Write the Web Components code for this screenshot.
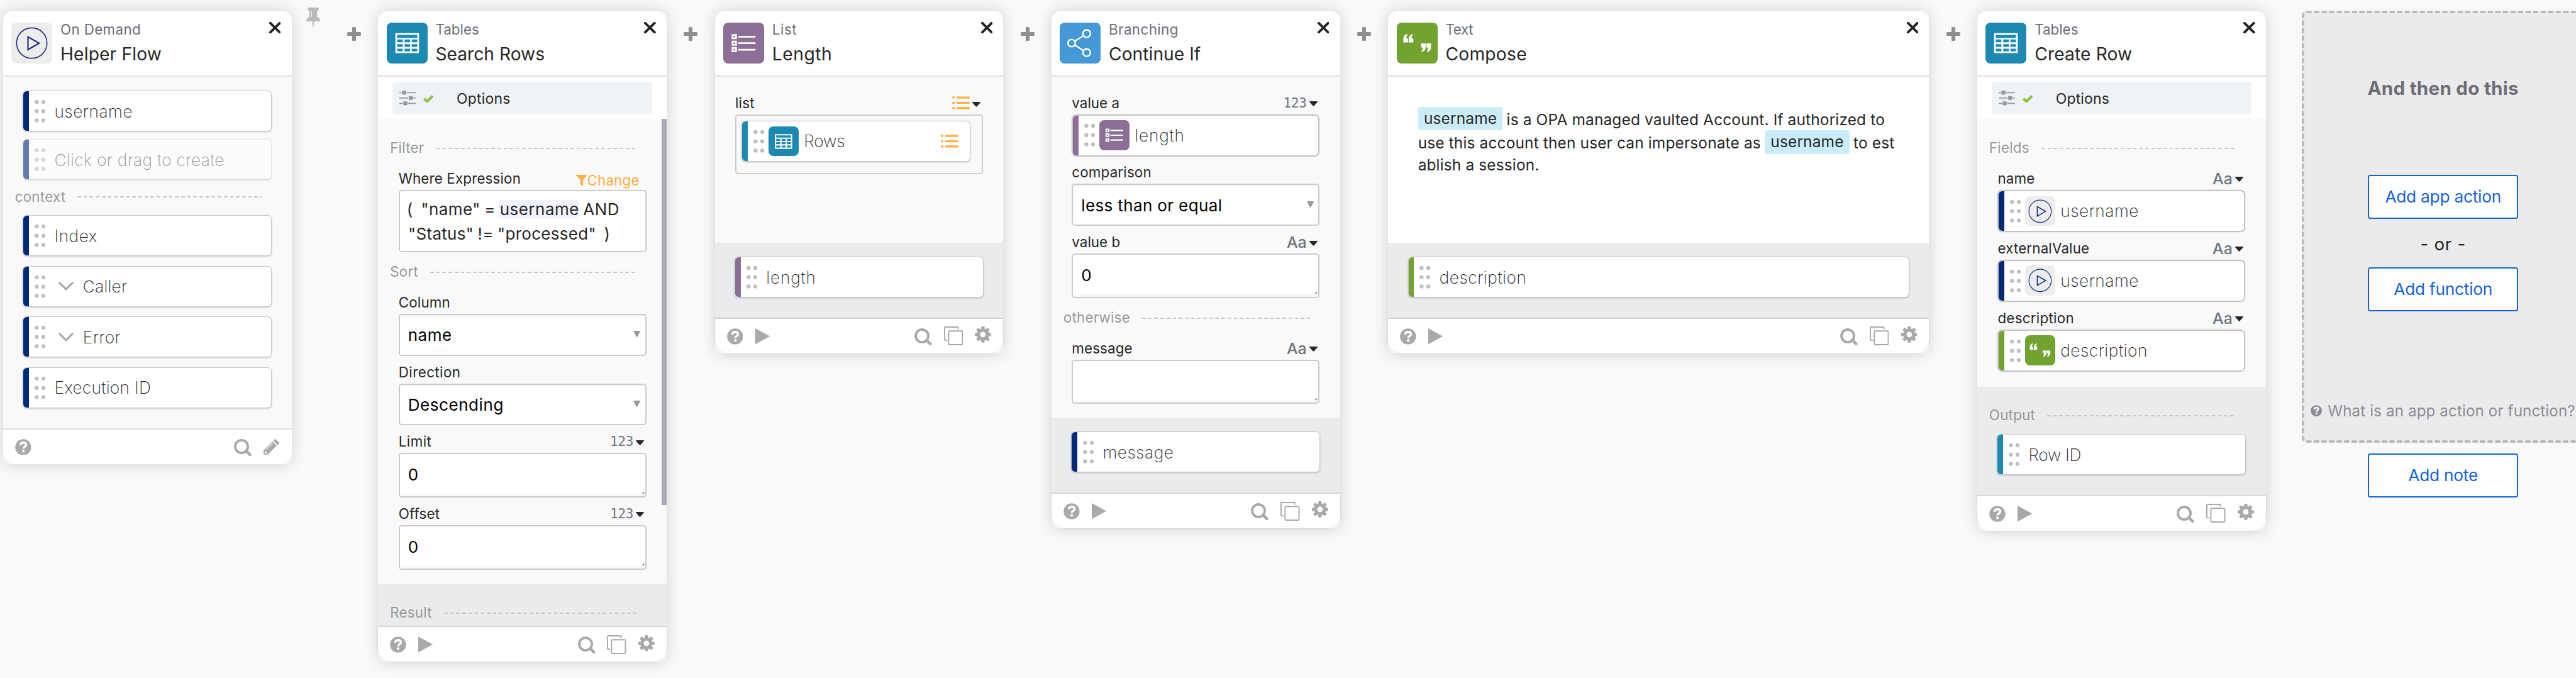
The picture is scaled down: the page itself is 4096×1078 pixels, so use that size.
<!DOCTYPE html>
<html lang="en">
<head>
<meta charset="utf-8">
<title>Flow designer</title>
<style>
  html, body { margin: 0; padding: 0; background: #f9f9f9; overflow: hidden; }
  body { font-family: Inter, "Liberation Sans", sans-serif; color: #272727; }
  /* vertical rhythm of a card's content */
  flow-section { margin-top: 17.5px; }
  flow-section:first-child, flow-section[slot] { margin-top: 33.3px; }
  flow-param { margin-top: 12.5px; }
  flow-param:first-child { margin-top: 28.5px; }
  flow-section + flow-param { margin-top: 21.2px; }
  flow-section + flow-field { margin-top: 16.7px; }
  flow-card > flow-field:first-child { margin-top: 24px; }
</style>
</head>
<body>
<flow-board>
  <flow-card app="On Demand" name="Helper Flow" icon="demand" mini style="--h:754px;--app-ls:.38px">
    <flow-field color="#00297a">username</flow-field>
    <flow-field color="#00297a" ghost style="margin-top:14.4px;--ls:.32px">Click or drag to create</flow-field>
    <flow-section style="margin-top:14px">context</flow-section>
    <flow-field color="#00297a">Index</flow-field>
    <flow-field color="#00297a" open style="margin-top:18.3px;--ls:.2px">Caller</flow-field>
    <flow-field color="#00297a" open style="margin-top:18.3px">Error</flow-field>
    <flow-field color="#00297a" style="margin-top:18.3px;--ls:.33px">Execution ID</flow-field>
  </flow-card>
  <flow-gap pin></flow-gap>

  <flow-card app="Tables" name="Search Rows" icon="table" options scroll style="--h:1083px;--in:773px;--app-ls:0px;--name-ls:0px">
    <flow-section>Filter</flow-section>
    <flow-param label="Where Expression" type="change">
      <flow-expression></flow-expression>
    </flow-param>
    <flow-section>Sort</flow-section>
    <flow-param label="Column"><flow-select>name</flow-select></flow-param>
    <flow-param label="Direction" style="--label-ls:.46px"><flow-select>Descending</flow-select></flow-param>
    <flow-param label="Limit" type="123" style="--label-ls:.45px"><flow-text>0</flow-text></flow-param>
    <flow-param label="Offset" type="123"><flow-text>0</flow-text></flow-param>
    <flow-section slot="out">Result</flow-section>
  </flow-card>
  <flow-gap></flow-gap>

  <flow-card app="List" name="Length" icon="list" style="--h:570px;--in:276px;--app-ls:.55px;--name-ls:.55px">
    <flow-param label="list" type="list">
      <flow-tray><flow-field color="#1c89b3" icon="table" list style="--ls:-.1px">Rows</flow-field></flow-tray>
    </flow-param>
    <flow-field slot="out" color="#8c6e96" style="--ls:.9px;margin-top:24px">length</flow-field>
  </flow-card>
  <flow-gap></flow-gap>

  <flow-card app="Branching" name="Continue If" icon="branch" style="--h:861px;--in:567px;--app-ls:.41px;--name-ls:.02px">
    <flow-param label="value a" type="123" style="--label-ls:.02px"><flow-field dropped color="#8c6e96" icon="list" style="--ls:.9px">length</flow-field></flow-param>
    <flow-param label="comparison"><flow-select style="--ls:.39px">less than or equal</flow-select></flow-param>
    <flow-param label="value b" type="Aa" style="--label-ls:.02px"><flow-text>0</flow-text></flow-param>
    <flow-section>otherwise</flow-section>
    <flow-param label="message" type="Aa" style="--label-ls:.12px"><flow-text></flow-text></flow-param>
    <flow-field slot="out" color="#00297a" style="margin-top:24px">message</flow-field>
  </flow-card>
  <flow-gap></flow-gap>

  <flow-card app="Text" name="Compose" icon="quote" white style="--w:900px;--h:570px;--in:276px;--app-ls:-.34px;--name-ls:.27px">
    <flow-compose></flow-compose>
    <flow-field slot="out" color="#72a230" style="margin-top:24px">description</flow-field>
  </flow-card>
  <flow-gap></flow-gap>

  <flow-card app="Tables" name="Create Row" icon="table" options style="--h:865px;--in:445px;--app-ls:0px">
    <flow-section>Fields</flow-section>
    <flow-param label="name" type="Aa"><flow-field dropped color="#00297a" icon="demand">username</flow-field></flow-param>
    <flow-param label="externalValue" type="Aa"><flow-field dropped color="#00297a" icon="demand">username</flow-field></flow-param>
    <flow-param label="description" type="Aa" style="--label-ls:.28px"><flow-field dropped color="#72a230" icon="quote">description</flow-field></flow-param>
    <flow-section slot="out">Output</flow-section>
    <flow-field slot="out" color="#1c89b3" style="--ls:-.3px">Row ID</flow-field>
  </flow-card>

  <flow-next></flow-next>
</flow-board>

<script>
const ICONS = {
  table: ['#1c89b3', `<rect x="14.3" y="17.3" width="39.4" height="33.4" rx="1.4" fill="#fff" fill-opacity=".96"/>
    <path fill="#1c89b3" d="M17.3 20.4h33.3v5H17.3zM17.3 28h9.2v4.6h-9.2zM29.6 28h9.1v4.6h-9.1zM41.6 28h9v4.6h-9zM17.3 35.7h9.2v4.6h-9.2zM29.6 35.7h9.1v4.6h-9.1zM41.6 35.7h9v4.6h-9zM17.3 43.3h9.2v4.4h-9.2zM29.6 43.3h9.1v4.4h-9.1zM41.6 43.3h9v4.4h-9z"/>`],
  list: ['#8c6e96', `<g fill="none" stroke="#fff" stroke-width="2.9"><path d="M15.5 20.6h5.7v5.4h-5.7zM15.5 31.5h5.7v5.4h-5.7zM15.5 42.3h5.7v5.4h-5.7z"/><path d="M26 23.3h26.6M26 34.2h26.6M26 45h26.6" stroke-linecap="round"/></g>`],
  branch: ['#4599d9', `<g fill="none" stroke="#fff" stroke-width="2.5"><circle cx="19.8" cy="34" r="6.1"/><circle cx="44.9" cy="18.2" r="6.2"/><circle cx="44.9" cy="49.9" r="6.2"/><path d="M25 30.8L39.6 21.6M25 37.2L39.6 46.5"/></g>`],
  quote: ['#72a230', `<g fill="#fff"><path d="M10.8 33v-6.4q.3-5.6 5.5-7.6h1.8q-2.5 3.4-2.3 7.2h2.9V33zM19.8 33v-6.4q.3-5.6 5.5-7.6h1.8q-2.5 3.4-2.3 7.2h2.7V33z"/><path d="M57 34.6v6.4q-.3 5.6-5.5 7.6h-1.8q2.5-3.4 2.3-7.2h-2.9V34.6zM48 34.6v6.4q-.3 5.6-5.5 7.6h-1.8q2.5-3.4 2.3-7.2h-2.7V34.6z"/></g>`],
  demand: ['#ededed', `<g fill="none" stroke="#1f2f86"><circle cx="34" cy="34" r="25.3" stroke-width="1.7"/><path d="M27.7 23.6V45L46.3 34.3z" stroke-width="2.3"/></g>`]
};
const badge = (k, s, r) => `<svg width="${s}" height="${s}" viewBox="0 0 68 68" style="border-radius:${r}px;background:${ICONS[k][0]};display:block;flex:none">${ICONS[k][1]}</svg>`;
const help = (s, c) => `<svg width="${s}" height="${s}" viewBox="0 0 27 27"><circle cx="13.5" cy="13.5" r="13.3" fill="${c}"/><path d="M8.9 10.3C9 7.2 11 6 13.6 6c2.9 0 4.7 1.5 4.7 3.8 0 3.2-4.6 3.2-4.6 6.3" fill="none" stroke="#fff" stroke-width="3.6"/><path d="M11.7 18.2h4v3.9h-4z" fill="#fff"/></svg>`;
const bullets = `<svg width="29.5" height="22" viewBox="0 0 29.5 22" style="display:block"><g stroke="#ffae43" stroke-width="3.3" stroke-linecap="round"><path d="M8.600 2.2h19.2M8.600 11h19.2M8.600 19.8h19.2"/></g><g fill="#ffae43"><circle cx="2.2" cy="2.2" r="2.1"/><circle cx="2.2" cy="11" r="2.1"/><circle cx="2.2" cy="19.8" r="2.1"/></g></svg>`;
const teeth = [0, 45, 90, 135, 180, 225, 270, 315].map(a => `<rect x="10.7" y="0" width="5.6" height="7" rx="1.2" transform="rotate(${a} 13.5 13.5)"/>`).join('');
const TOOLS = {
  search: `<svg width="29" height="28.5" viewBox="0 0 29 28.5" style="margin-top:16px"><g fill="none" stroke="#a9a9a9"><circle cx="12.6" cy="12.6" r="10.5" stroke-width="4"/><path d="M20.3 19.8L26.6 26" stroke-width="4.8" stroke-linecap="round"/></g></svg>`,
  copy: `<svg width="32" height="31.5" viewBox="0 0 32 31.5" style="margin-top:13.4px"><g fill="none" stroke="#a9a9a9" stroke-width="2"><rect x="7.7" y="7.5" width="23.2" height="22.9" rx="1.5"/><path d="M23.8 4.600V2.5Q23.8 1 22.3 1H2.5Q1 1 1 2.5v19.2q0 1.5 1.5 1.5h2.8"/></g></svg>`,
  gear: `<svg width="27" height="27" viewBox="0 0 27 27" style="margin-top:13.2px"><g fill="#a9a9a9"><circle cx="13.5" cy="13.5" r="10.2"/>${teeth}</g><circle cx="13.5" cy="13.5" r="4.5" fill="#fff"/></svg>`,
  pencil: `<svg width="26.5" height="26" viewBox="0 0 26.5 26" style="margin-top:16px"><g fill="#a9a9a9"><path d="M0 26v-7L14.9 4.2l6.9 6.9L7 26z"/><path d="M16.4 2.8L18.6.6q1-1 2 0l5.2 5.2q1 1 0 2l-2.4 2.3z"/></g><path d="M4.7 17.6L15 7.4" stroke="#fff" stroke-width="1.3"/><path d="M2.3 20.6v3.2h3.4v-1.9H4.2v-1.3z" fill="#fff"/></svg>`
};
const plus = `<svg width="23" height="23" viewBox="0 0 23 23" style="display:block"><rect x="0" y="8.3" width="23" height="6.4" rx="1.6" fill="#8f8f8f"/><rect x="8.3" y="0" width="6.4" height="23" rx="1.6" fill="#8f8f8f"/></svg>`;

const define = (name, render) => customElements.define(name, class extends HTMLElement {
  connectedCallback() {
    if (this.shadowRoot) return;
    const t = document.createElement('template');
    t.innerHTML = render(this, k => this.getAttribute(k), k => this.hasAttribute(k));
    this.attachShadow({ mode: 'open' }).append(t.content.cloneNode(true));
  }
});

define('flow-board', () => `<style>
  :host{display:flex;align-items:flex-start;box-sizing:border-box;width:4285px;height:1128px;padding:0 0 0 5px;overflow:hidden;zoom:.9559;background:#f9f9f9;white-space:nowrap}
  ::slotted(*){flex:none}
</style><slot></slot>`);

define('flow-gap', (el, a, has) => `<style>
  :host{display:flex;justify-content:center;width:80px;box-sizing:border-box}
  :host([pin]){width:144px;justify-content:flex-start;padding-left:25px;gap:44.5px}
  .p{margin-top:45.2px}
  .t{margin-top:12.5px}
</style>${has('pin') ? `<svg class="t" width="23" height="34" viewBox="0 0 23 34"><path d="M4 0h15q1.8 0 1.8 2.4T19 5h-1v10.3q4.7 2 5 7.7H13l-1.3 10.8h-.5L10 23H0q.3-5.7 5-7.7V5H4Q2.2 5 2.2 2.4T4 0z" fill="#b9b9b9"/><path d="M8.6 5.4v10" stroke="#eee" stroke-width="1.5"/></svg>` : ''}<div class="p">${plus}</div>`);

define('flow-card', (el, a, has) => `<style>
  :host{display:flex;flex-direction:column;width:var(--w,480px);height:var(--h);margin-top:18px;border-radius:14px;background:#f9f9f9;box-shadow:0 1px 24px rgba(0,0,0,.16)}
  header{display:flex;box-sizing:border-box;height:110px;padding:20px 18px 0 14px;background:#fff;border-bottom:2.2px solid #e0e0e0;border-radius:24px 24px 0 0;flex:none}
  .t{flex:1;margin:-3px 0 0 13.5px}
  .app{font-size:23.4px;line-height:30px;color:#6e6e78;letter-spacing:var(--app-ls,.2px)}
  .name{font-size:29.5px;line-height:36px;margin-top:7.7px;letter-spacing:var(--name-ls,.14px)}
  .x{margin-top:-1.5px}
  .opts{display:flex;align-items:center;flex:none;height:70px;background:#fff;padding:0 24px}
  .opts>div{display:flex;align-items:center;flex:1;height:54px;border-radius:6px;background:#eff3f6;padding-left:11.3px}
  .opts .ck{margin-left:12.5px;margin-top:3px}
  .opts span{font-size:24px;line-height:30px;margin:2.2px 0 0 38px;letter-spacing:.2px}
  .in{height:var(--in,586px);box-sizing:border-box;flex:none;display:flex}
  :host([white]) .in{background:#fff}
  .col{flex:1;min-width:0}
  .bar{width:8px;height:642px;background:#a7abb4;margin-left:-8px}
  .out{flex:1;min-height:0;background:#eaebed}
  footer{display:flex;position:relative;flex:none;height:58px;box-sizing:border-box;padding:0 20px;background:#fff;border-radius:0 0 24px 24px;box-shadow:0 -1px 2.5px rgba(0,0,0,.17)}
  :host([mini]) footer{box-shadow:0 -2px 0 #e0e0e0}
  footer svg{display:block;flex:none}
  .l{display:flex;flex:1;gap:20px}
  .l svg{margin-top:15.8px}
  .r{display:flex;gap:20px}
</style>
<header>${badge(a('icon'), 68, 8)}<div class="t"><div class="app">${a('app')}</div><div class="name">${a('name')}</div></div>
<svg class="x" width="19.5" height="19" viewBox="0 0 19.5 19"><path d="M1.9 1.8l15.7 15.4M17.6 1.8L1.9 17.2" stroke="#222" stroke-width="4" stroke-linecap="round"/></svg></header>
${has('options') ? `<div class="opts"><div><svg width="27.5" height="25" viewBox="0 0 27.5 25"><g stroke="#999" stroke-width="2"><path d="M0 3.5h3.7M12.3 3.5h15.2M0 12.4h14.7M23.3 12.4h4.2M0 21.3h5.7M14.3 21.3h13.2"/></g><g fill="#999"><rect x="4.6" y=".2" width="6.8" height="6.6" rx="1"/><rect x="15.6" y="9.1" width="6.8" height="6.6" rx="1"/><rect x="6.6" y="18" width="6.8" height="6.6" rx="1"/></g></svg>
<svg class="ck" width="17.3" height="13" viewBox="0 0 17.3 13"><path d="M1.5 6l5 4.7L15.800 1.6" fill="none" stroke="#86c440" stroke-width="4.4"/></svg><span>Options</span></div></div>` : ''}
<div class="in"><div class="col"><slot></slot></div>${has('scroll') ? '<div class="bar"></div>' : ''}</div>
${has('mini') ? '' : '<div class="out"><slot name="out"></slot></div>'}
<footer><div class="l">${help(27, '#a9a9a9')}${has('mini') ? '' : '<svg width="24.5" height="26.5" viewBox="0 0 24.5 26.5"><path d="M0 0l24.3 13.2L0 26.5z" fill="#a9a9a9"/></svg>'}</div>
<div class="r">${has('mini') ? TOOLS.search + TOOLS.pencil : TOOLS.search + TOOLS.copy + TOOLS.gear}</div></footer>`);

define('flow-section', () => `<style>
  :host{display:flex;align-items:center;height:30px;padding:0 50px 0 19.8px;gap:20px;font-size:23.4px;line-height:30px;color:#999;letter-spacing:.25px}
  i{flex:1;height:2px;margin-top:1px;background:repeating-linear-gradient(90deg,#c9c9c9 0 6px,transparent 6px 10.15px)}
</style><span><slot></slot></span><i></i>`);

define('flow-param', (el, a) => {
  const type = a('type');
  const caret = `<svg width="13.6" height="8.5" viewBox="0 0 13.6 8.5" style="display:block"><path d="M.8 0h12q1.2.2.5 1.2L7.8 7.7q-1 1-2 0L.3 1.2Q-.4.2.8 0z" fill="#272727"/></svg>`;
  const marks = {
    '123': `<span class="num">123</span>${caret}`,
    'Aa': `<span class="aa">Aa</span>${caret}`,
    'list': `${bullets}<span style="margin-top:3px">${caret}</span>`,
    'change': `<svg width="18.5" height="18.7" viewBox="0 0 18.5 18.7"><path d="M.6 0h17.3q1 .4.2 1.4L11.6 8v10q-.2 1-1.2.5L7.2 15.5V8L.4 1.4Q-.4.4.6 0z" fill="#ffae43"/></svg><span class="chg">Change</span>`
  };
  return `<style>
  :host{display:block;padding:0 34px}
  .row{display:flex;align-items:center;height:30px;margin-bottom:3.5px;font-size:23.4px;line-height:30px;letter-spacing:var(--label-ls,.17px)}
  .lab{flex:1}
  .ty{display:flex;align-items:center;gap:4px;margin-right:3.8px;color:#6b7680;letter-spacing:0}
  .ty.change{gap:0;margin:6px 11.5px 0 0;color:#ffae43}
  .num{font:22px/30px "DejaVu Sans Mono",monospace;letter-spacing:-.3px}
  .ty svg{margin-top:2.4px}
  .ty.change svg,.ty.list>svg{margin-top:-1px}
  .aa{font-size:26px;font-weight:500;line-height:28px}
  .chg{letter-spacing:.16px}
</style><div class="row"><span class="lab">${a('label')}</span>${type ? `<span class="ty ${type === 'change' || type === 'list' ? type : ''}">${marks[type]}</span>` : ''}</div><slot></slot>`;
});

define('flow-field', (el, a, has) => `<style>
  :host{display:block;margin-left:34px;margin-right:34px}
  :host([dropped]){margin:0;padding:2px}
  .s{border-radius:6px;box-shadow:0 0 0 1px #c6c6c6,0 1px 3px 1px rgba(0,0,0,.2)}
  :host([dropped]) .s{box-shadow:0 0 0 2px #c4c4c4,0 0 3px 2px rgba(0,0,0,.1)}
  :host([ghost]) .s{box-shadow:0 1px 3px rgba(0,0,0,.35);opacity:.6;color:#555}
  .f{display:flex;align-items:center;height:66px;border-radius:6px;overflow:hidden;background:#fff}
  .bar{width:9px;align-self:stretch;background:${a('color')};flex:none}
  .dots{flex:none;margin-left:9.5px;display:block}
  .t{flex:1;font-weight:200;font-size:27.5px;line-height:36px;padding-top:2.4px;letter-spacing:var(--ls,.57px);margin-left:14.9px}
  .ic{margin-left:7.3px}
  .ic+.t{margin-left:8.7px}
  .ch{display:block;margin-left:21.5px}
  .ch+.t{margin-left:16px}
</style><div class="s"><div class="f"><div class="bar"></div>
<svg class="dots" width="18" height="39" viewBox="0 0 18 39"><g fill="#c1c1c1"><circle cx="3.5" cy="4.2" r="3.4"/><circle cx="14.7" cy="4.2" r="3.4"/><circle cx="3.5" cy="19.6" r="3.4"/><circle cx="14.7" cy="19.6" r="3.4"/><circle cx="3.5" cy="35" r="3.4"/><circle cx="14.7" cy="35" r="3.4"/></g></svg>
${a('icon') ? `<div class="ic">${badge(a('icon'), 50, 8)}</div>` : ''}${has('open') ? `<svg class="ch" width="25" height="15" viewBox="0 0 25 15"><path d="M1.9 2l10.6 10.4L23.1 2" fill="none" stroke="#a9a9a9" stroke-width="3.4" stroke-linecap="round"/></svg>` : ''}
<div class="t"><slot></slot></div>${has('list') ? `<div style="margin-right:19px">${bullets}</div>` : ''}</div></div>`);

define('flow-tray', () => `<style>
  :host{display:block;box-sizing:border-box;height:100px;border:2.2px solid #ccc;border-radius:5px;padding:9.7px 19.5px 0 9.7px}
  ::slotted(flow-field){margin:0 !important}
</style><slot></slot>`);

define('flow-select', () => `<style>
  :host{display:flex;box-sizing:border-box;height:70px;border:2.2px solid #ccc;border-radius:5px;background:#fff;box-shadow:inset 0 2px 2px rgba(0,0,0,.05);padding:0 7.3px 0 13.5px;color:#000;font-size:27.2px;line-height:36px;letter-spacing:var(--ls,.6px)}
  span{flex:1;margin-top:16.2px}
  svg{margin-top:27px}
</style><span><slot></slot></span><svg width="11.8" height="11.5" viewBox="0 0 11.8 11.5"><path d="M0 0h11.8L5.9 11.5z" fill="#999"/></svg>`);

define('flow-text', () => `<style>
  :host{display:flex;flex-direction:column;box-sizing:border-box;height:74px;border:2.2px solid #ccc;border-radius:5px;background:#fff;color:#000;font-size:27.2px;line-height:36px}
  .v{display:flex;flex:1;justify-content:space-between;align-items:flex-start;padding:16.2px 0 0 13.5px}
  .g{height:4px;background:#f7f7f7;border-radius:0 0 4px 4px}
  svg{align-self:flex-end;margin-right:1px}
</style><div class="v"><span><slot></slot></span><svg width="4" height="4" viewBox="0 0 4 4"><path d="M.6 3.4L3.400.6" stroke="#444" stroke-width="1.3"/></svg></div><div class="g"></div>`);

define('flow-expression', () => `<style>
  :host{display:block;box-sizing:border-box;height:103.6px;border:2.2px solid #ccc;border-radius:5px;background:#fff;padding:10.9px 0 0 11.5px;font-size:27.2px;line-height:40px;letter-spacing:.42px;word-spacing:-1.3px;white-space:pre}
  b{display:inline-block;font-weight:400;line-height:31px;background:#f1f2ff;padding-left:.5px;letter-spacing:.5px;border-radius:2px}
  div+div{padding-left:2.5px;letter-spacing:.3px}
</style><div>(  "name" = <b>username</b> AND</div><div>"Status" != "processed"  )</div>`);

define('flow-compose', () => `<style>
  :host{display:block;padding:50px 0 0 49.7px;font-size:25.6px;letter-spacing:.14px}
  .l{display:flex;height:39px;gap:6.5px;line-height:39px}
  .l span{margin-top:2px}
  .l:last-child{height:36px;line-height:32px}
  mark{background:#cbedfa;color:inherit;border-radius:4px;width:141px;text-align:center}
</style>
<div class="l"><mark>username</mark><span>is a OPA managed vaulted Account. If authorized to</span></div>
<div class="l"><span>use this account then user can impersonate as</span><mark>username</mark><span>to est</span></div>
<div class="l"><span>ablish a session.</span></div>`);

define('flow-button', () => `<style>
  :host{display:flex;align-items:center;justify-content:center;box-sizing:border-box;width:250px;height:74px;border:2.2px solid #1662dd;border-radius:4px;background:#fff;color:#1662dd;font-size:27.5px;line-height:36px;letter-spacing:-.25px}
</style><slot></slot>`);

define('flow-next', () => `<style>
  :host{display:flex;flex-direction:column;align-items:center;width:470px;margin:18px 0 0 60px}
  .p{display:flex;flex-direction:column;align-items:center;box-sizing:border-box;width:470px;height:719px;border:4.2px dashed #bbb;border-radius:8px;background:#ebebed}
  h2{margin:104.6px 0 0;font-size:31px;line-height:40px;font-weight:700;letter-spacing:.25px;color:#6e6e78}
  .or{font-size:29px;line-height:30px;margin:26.5px 0 23.5px;letter-spacing:.75px;color:#222}
  .q{display:flex;align-items:center;align-self:flex-start;margin:151.6px 0 0 10.8px;gap:9.2px;font-size:25.2px;line-height:30px;letter-spacing:.16px;color:#8c8c96}
  .q svg{display:block;margin-top:-3px}
</style><div class="p"><h2>And then do this</h2><flow-button style="margin-top:123.6px">Add app action</flow-button><div class="or">- or -</div><flow-button>Add function</flow-button><div class="q">${help(19, '#8c8c96')}<span>What is an app action or function?</span></div></div>
<flow-button style="margin-top:17px">Add note</flow-button>`);
</script>
</body>
</html>
